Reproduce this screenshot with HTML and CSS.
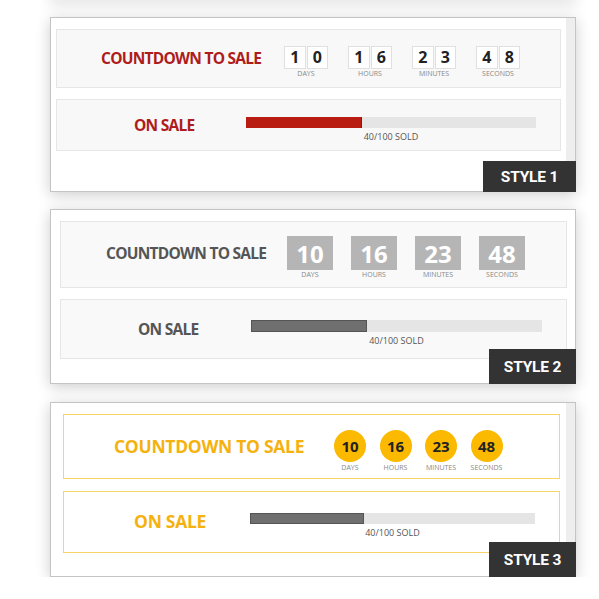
FILE: index.html
```html
<!DOCTYPE html>
<html lang="en">
<head>
    <meta charset="UTF-8">
    <meta name="viewport" content="width=device-width, initial-scale=1.0">
    <title>Sale Countdown Styles</title>
    <link rel="stylesheet" href="styles.css">
</head>
<body>
    <div class="page">
        <div class="panel_cut"></div>

        <!-- Style 1 -->
        <div class="panel style1">
            <div class="panel_body">
                <div class="box countdown">
                    <div class="title">COUNTDOWN TO SALE</div>
                    <div class="units">
                        <div class="unit"><div class="digits"><span>1</span><span>0</span></div><div class="unit_label">DAYS</div></div>
                        <div class="unit"><div class="digits"><span>1</span><span>6</span></div><div class="unit_label">HOURS</div></div>
                        <div class="unit"><div class="digits"><span>2</span><span>3</span></div><div class="unit_label">MINUTES</div></div>
                        <div class="unit"><div class="digits"><span>4</span><span>8</span></div><div class="unit_label">SECONDS</div></div>
                    </div>
                </div>
                <div class="box sale">
                    <div class="title">ON SALE</div>
                    <div class="progress">
                        <div class="track"><div class="fill" style="width: 40%"></div></div>
                        <div class="sold">40/100 SOLD</div>
                    </div>
                </div>
            </div>
            <div class="scrollbar"></div>
            <div class="badge">STYLE 1</div>
        </div>

        <!-- Style 2 -->
        <div class="panel style2">
            <div class="panel_body">
                <div class="box countdown">
                    <div class="title">COUNTDOWN TO SALE</div>
                    <div class="units">
                        <div class="unit"><div class="digits">10</div><div class="unit_label">DAYS</div></div>
                        <div class="unit"><div class="digits">16</div><div class="unit_label">HOURS</div></div>
                        <div class="unit"><div class="digits">23</div><div class="unit_label">MINUTES</div></div>
                        <div class="unit"><div class="digits">48</div><div class="unit_label">SECONDS</div></div>
                    </div>
                </div>
                <div class="box sale">
                    <div class="title">ON SALE</div>
                    <div class="progress">
                        <div class="track"><div class="fill" style="width: 40%"></div></div>
                        <div class="sold">40/100 SOLD</div>
                    </div>
                </div>
            </div>
            <div class="badge">STYLE 2</div>
        </div>

        <!-- Style 3 -->
        <div class="panel style3">
            <div class="panel_body">
                <div class="box countdown">
                    <div class="title">COUNTDOWN TO SALE</div>
                    <div class="units">
                        <div class="unit"><div class="digits">10</div><div class="unit_label">DAYS</div></div>
                        <div class="unit"><div class="digits">16</div><div class="unit_label">HOURS</div></div>
                        <div class="unit"><div class="digits">23</div><div class="unit_label">MINUTES</div></div>
                        <div class="unit"><div class="digits">48</div><div class="unit_label">SECONDS</div></div>
                    </div>
                </div>
                <div class="box sale">
                    <div class="title">ON SALE</div>
                    <div class="progress">
                        <div class="track"><div class="fill" style="width: 40%"></div></div>
                        <div class="sold">40/100 SOLD</div>
                    </div>
                </div>
            </div>
            <div class="scrollbar"></div>
            <div class="badge">STYLE 3</div>
        </div>
    </div>
</body>
</html>
```

FILE: styles.css
```css
* {
    margin: 0;
    padding: 0;
    box-sizing: border-box;
}

body {
    background-color: white;
    font-family: "Open Sans", "Liberation Sans", sans-serif;
    overflow: hidden;
}

.page {
    display: flex;
    flex-direction: column;
    width: 576px;
    padding-left: 50px;
}

/* bottom of the previous screenshot, only its shadow shows */
.panel_cut {
    height: 6px;
    margin-top: -6px;
    background-color: white;
    box-shadow: 0 3px 14px rgba(0, 0, 0, 0.22);
}

.panel {
    position: relative;
    display: flex;
    height: 175px;
    border: 1px solid #c4c4c4;
    background-color: white;
    box-shadow: 0 3px 14px rgba(0, 0, 0, 0.2);
}

.panel_body {
    flex: 1;
    display: flex;
    flex-direction: column;
    padding-top: 11px;
}

.scrollbar {
    width: 9px;
    background-color: #eeeeee;
}

.box {
    display: flex;
    align-items: flex-start;
    border: 1px solid #e6e6e6;
    background-color: #f8f8f8;
}

.title {
    flex-shrink: 0;
    font-weight: 700;
    white-space: nowrap;
    letter-spacing: -0.75px;
}

.units {
    display: flex;
}

.unit {
    display: flex;
    flex-direction: column;
    align-items: center;
}

.unit_label {
    font-size: 7px;
    line-height: 8px;
    color: #888;
    white-space: nowrap;
}

.digits {
    display: flex;
    justify-content: center;
    align-items: center;
    font-weight: 700;
}

.progress {
    display: flex;
    flex-direction: column;
    align-items: center;
}

.track {
    width: 100%;
    background-color: #e5e5e5;
}

.fill {
    height: 100%;
}

.sold {
    margin-top: 4px;
    font-size: 9px;
    line-height: 10px;
    color: #555;
}

.badge {
    position: absolute;
    right: -1px;
    bottom: -1px;
    display: flex;
    align-items: center;
    justify-content: center;
    background-color: #333;
    color: white;
    font-family: Roboto, "Liberation Sans", sans-serif;
    font-weight: 700;
    font-size: 15.5px;
    letter-spacing: -0.2px;
}

/* Style 1 */
.style1 {
    margin-top: 17px;
}

.style1 .panel_body {
    padding-left: 5px;
    padding-right: 5px;
}

.style1 .countdown {
    height: 59px;
    padding-top: 16px;
}

.style1 .sale {
    height: 52px;
    margin-top: 11px;
    padding-top: 15px;
}

.style1 .title {
    color: #ae1c1c;
    font-size: 15.5px;
}

.style1 .countdown .title {
    width: 227px;
    padding-left: 44px;
    line-height: 23px;
    margin-top: 1px;
}

.style1 .units {
    gap: 20px;
}

.style1 .unit {
    width: 44px;
}

.style1 .digits {
    gap: 1px;
    width: 100%;
}

.style1 .digits span {
    flex: 1;
    height: 23px;
    border: 1px solid #e0e0e0;
    background-color: white;
    color: #222;
    font-size: 16px;
    line-height: 21px;
    text-align: center;
}

.style1 .unit_label {
    margin-top: 1px;
}

.style1 .sale .title {
    width: 189px;
    padding-left: 77px;
    line-height: 20px;
}

.style1 .progress {
    width: 290px;
    margin-top: 2px;
}

.style1 .track {
    height: 11px;
}

.style1 .fill {
    background-color: #b91d12;
    border-right: 1px solid #8e140c;
}

.style1 .badge {
    width: 93px;
    height: 31px;
}

/* Style 2 */
.style2 {
    margin-top: 17px;
}

.style2 .panel_body {
    padding-left: 9px;
    padding-right: 8px;
}

.style2 .box {
    background-color: #f9f9f9;
}

.style2 .countdown {
    height: 67px;
    padding-top: 14px;
}

.style2 .sale {
    height: 60px;
    margin-top: 11px;
    padding-top: 19px;
}

.style2 .title {
    color: #555;
    font-size: 15.5px;
}

.style2 .countdown .title {
    width: 226px;
    padding-left: 45px;
    line-height: 34px;
}

.style2 .units {
    gap: 18px;
}

.style2 .unit {
    width: 46px;
}

.style2 .digits {
    width: 46px;
    height: 34px;
    background-color: #b5b5b5;
    color: white;
    font-size: 24px;
}

.style2 .unit_label {
    margin-top: 1px;
}

.style2 .sale .title {
    width: 190px;
    padding-left: 77px;
    line-height: 20px;
}

.style2 .progress {
    width: 291px;
    margin-top: 1px;
}

.style2 .track {
    height: 12px;
}

.style2 .fill {
    background-color: #6f6f6f;
    border: 1px solid #555;
}

.style2 .badge {
    width: 87px;
    height: 35px;
}

/* Style 3 */
.style3 {
    margin-top: 18px;
}

.style3 .panel_body {
    padding-left: 12px;
    padding-right: 6px;
}

.style3 .box {
    border-color: #f7d46c;
    background-color: white;
}

.style3 .countdown {
    height: 65px;
    padding-top: 15px;
}

.style3 .sale {
    height: 62px;
    margin-top: 12px;
    padding-top: 18px;
}

.style3 .title {
    color: #f5b20f;
    font-size: 17.5px;
    letter-spacing: -0.3px;
}

.style3 .countdown .title {
    width: 270px;
    padding-left: 50px;
    line-height: 32px;
}

.style3 .units {
    gap: 13.5px;
}

.style3 .unit {
    width: 32px;
}

.style3 .digits {
    width: 32px;
    height: 32px;
    border-radius: 50%;
    background-color: #fbb900;
    color: #222;
    font-size: 15px;
}

.style3 .unit_label {
    margin-top: 2px;
}

.style3 .sale .title {
    width: 186px;
    padding-left: 70px;
    line-height: 22px;
}

.style3 .progress {
    width: 285px;
    margin-top: 3px;
}

.style3 .track {
    height: 11px;
}

.style3 .fill {
    background-color: #6f6f6f;
    border: 1px solid #555;
}

.style3 .badge {
    width: 87px;
    height: 35px;
}
```
